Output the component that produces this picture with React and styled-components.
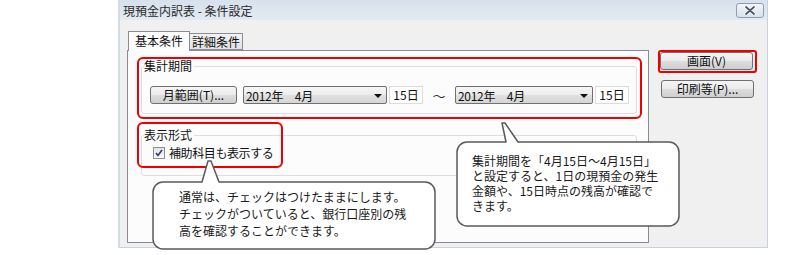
import React from "react";
import styled, { createGlobalStyle } from "styled-components";

const Global = createGlobalStyle`
  html, body { margin: 0; padding: 0; background: #fff; }
  body { font-family: "Noto Sans CJK JP", "Noto Sans", sans-serif; color: #1a1a1a; }
`;

const Stage = styled.div`
  position: relative;
  width: 800px;
  height: 255px;
  overflow: hidden;
`;

const Window = styled.div`
  margin-left: 118px;
  width: 650px;
  height: 248px;
  box-sizing: border-box;
  background: #f0f0f0;
  border-left: 2px solid #d3dbe4;
  border-right: 1px solid #c9d2dc;
  border-bottom: 1px solid #c9d2dc;
  display: flex;
  flex-direction: column;
`;

const TitleBar = styled.div`
  height: 20px;
  flex: none;
  display: flex;
  align-items: center;
  justify-content: space-between;
  padding: 0 3px 0 3px;
  background: linear-gradient(#d7e1ec, #e3eaf2);
  font-size: 12px;
  color: #2a2a2a;
`;

const CloseBtn = styled.div`
  width: 26px;
  height: 13px;
  border: 1px solid #8e9db0;
  border-radius: 3px;
  background: linear-gradient(#f3f6f9, #d9e1ea);
  display: flex;
  align-items: center;
  justify-content: center;
`;

const Body = styled.div`
  flex: 1;
  display: flex;
  padding: 11px 0 4px 7px;
  min-height: 0;
`;

const TabArea = styled.div`
  width: 522px;
  display: flex;
  flex-direction: column;
`;

const TabStrip = styled.div`
  height: 19px;
  flex: none;
  display: flex;
  align-items: flex-end;
  padding-left: 1px;
  position: relative;
  z-index: 1;
`;

const Tab = styled.div`
  box-sizing: border-box;
  height: ${(p) => (p.$active ? "20px" : "17px")};
  width: ${(p) => p.$w}px;
  margin-bottom: ${(p) => (p.$active ? "-1px" : "0")};
  border: 1px solid #898c95;
  ${(p) => (p.$active ? "border-bottom: none;" : "border-left: none;")}
  background: ${(p) => (p.$active ? "#fcfcfc" : "linear-gradient(#f3f3f3, #e2e2e2)")};
  font-size: 12px;
  line-height: 16px;
  padding-top: ${(p) => (p.$active ? "1px" : "0")};
  text-align: center;
  color: #111;
`;

const Panel = styled.div`
  flex: 1;
  border: 1px solid #898c95;
  background: #fcfcfc;
  padding: 8px 0 0 13px;
  display: flex;
  flex-direction: column;
`;

const Group = styled.fieldset`
  margin: 0;
  width: 496px;
  box-sizing: border-box;
  border: 1px solid #d8e0e6;
  border-radius: 3px;
  padding: ${(p) => p.$pt}px 0 0 2px;
  height: ${(p) => p.$h}px;
  margin-top: ${(p) => p.$mt || 0}px;
`;

const Legend = styled.legend`
  font-size: 12px;
  line-height: 14px;
  padding: 0 2px 0 0;
  margin-left: 0;
  color: #111;
`;

const Row = styled.div`
  display: flex;
  align-items: center;
  height: 18px;
  margin-left: 6px;
`;

const Button = styled.div`
  box-sizing: border-box;
  width: ${(p) => p.$w}px;
  height: 18px;
  border: 1px solid #707070;
  border-radius: 3px;
  background: linear-gradient(#f4f4f4 0%, #ebebeb 50%, #dddddd 51%, #cfcfcf 100%);
  font-size: 12px;
  line-height: 16px;
  text-align: center;
  color: #111;
  margin-left: ${(p) => p.$ml || 0}px;
  flex: none;
`;

const Combo = styled.div`
  box-sizing: border-box;
  width: ${(p) => p.$w}px;
  height: 18px;
  margin-left: ${(p) => p.$ml || 0}px;
  border: 1px solid #707070;
  border-radius: 2px;
  background: linear-gradient(#f6f6f6 0%, #ececec 50%, #e0e0e0 51%, #d6d6d6 100%);
  display: flex;
  align-items: center;
  justify-content: space-between;
  padding: 0 4px 0 2px;
  font-size: 12px;
  letter-spacing: -0.3px;
  color: #111;
  flex: none;
`;

const Arrow = styled.span`
  width: 0;
  height: 0;
  border-left: 4px solid transparent;
  border-right: 4px solid transparent;
  border-top: 4px solid #111;
  margin-top: 1px;
`;

const DayField = styled.div`
  box-sizing: border-box;
  width: ${(p) => p.$w}px;
  height: 18px;
  margin-left: 2px;
  border: 1px solid #dcdcdc;
  background: #fff;
  font-size: 12px;
  line-height: 16px;
  text-align: center;
  color: #111;
  flex: none;
`;

const Tilde = styled.span`
  width: 32px;
  text-align: center;
  font-size: 13px;
  color: #333;
  flex: none;
`;

const CheckRow = styled.label`
  display: flex;
  align-items: center;
  gap: 4px;
  margin-left: 9px;
  font-size: 12px;
  line-height: 16px;
  letter-spacing: -0.4px;
  color: #111;
`;

const CheckBox = styled.span`
  box-sizing: border-box;
  width: 12px;
  height: 12px;
  border: 1px solid #8f8f8f;
  background: linear-gradient(#e4e4e4, #fafafa);
  display: flex;
  align-items: center;
  justify-content: center;
`;

const ButtonCol = styled.div`
  display: flex;
  flex-direction: column;
  gap: 10px;
  padding: 21px 0 0 11px;
`;

const RedBox = styled.div`
  position: absolute;
  left: ${(p) => p.$x}px;
  top: ${(p) => p.$y}px;
  width: ${(p) => p.$w}px;
  height: ${(p) => p.$h}px;
  box-sizing: border-box;
  border: 2px solid #ee0000;
  border-radius: ${(p) => p.$r || 6}px;
  pointer-events: none;
`;

const CalloutWrap = styled.div`
  position: absolute;
  left: ${(p) => p.$x}px;
  top: ${(p) => p.$y}px;
  width: ${(p) => p.$w}px;
  height: ${(p) => p.$h}px;
`;

const CalloutSvg = styled.svg`
  position: absolute;
  left: 0;
  top: 0;
  overflow: visible;
`;

const CalloutText = styled.div`
  position: relative;
  padding: ${(p) => p.$pad};
  font-size: 12px;
  line-height: ${(p) => p.$lh}px;
  color: #1a1a1a;
  white-space: nowrap;
`;

function Callout({ x, y, w, h, tail, pad, lh, children }) {
  const r = 10;
  const [b1, t1, t2, b2, ty] = tail;
  const d = `M ${r} 0 H ${b1} L ${t1} ${ty} L ${t2} ${ty} L ${b2} 0 H ${w - r} A ${r} ${r} 0 0 1 ${w} ${r} V ${h - r} A ${r} ${r} 0 0 1 ${w - r} ${h} H ${r} A ${r} ${r} 0 0 1 0 ${h - r} V ${r} A ${r} ${r} 0 0 1 ${r} 0 Z`;
  return (
    <CalloutWrap $x={x} $y={y} $w={w} $h={h}>
      <CalloutSvg width={w} height={h}>
        <path d={d} fill="#fff" stroke="#5a5a5a" strokeWidth="1.5" strokeLinejoin="round" />
      </CalloutSvg>
      <CalloutText $pad={pad} $lh={lh}>{children}</CalloutText>
    </CalloutWrap>
  );
}

export default function App() {
  return (
    <Stage>
      <Global />
      <Window>
        <TitleBar>
          <span>現預金内訳表 - 条件設定</span>
          <CloseBtn>
            <svg width="12" height="9" viewBox="0 0 12 9">
              <path d="M2 1 L10 8 M10 1 L2 8" stroke="#fff" strokeWidth="3.4" strokeLinecap="round" />
              <path d="M2 1 L10 8 M10 1 L2 8" stroke="#4b5666" strokeWidth="1.8" strokeLinecap="round" />
            </svg>
          </CloseBtn>
        </TitleBar>
        <Body>
          <TabArea>
            <TabStrip>
              <Tab $active $w={62}>基本条件</Tab>
              <Tab $w={53}>詳細条件</Tab>
            </TabStrip>
            <Panel>
              <Group $pt={13} $h={55}>
                <Legend>集計期間</Legend>
                <Row>
                  <Button $w={87}>月範囲(T)...</Button>
                  <Combo $w={144} $ml={6}>
                    <span>2012年　4月</span>
                    <Arrow />
                  </Combo>
                  <DayField $w={34}>15日</DayField>
                  <Tilde>～</Tilde>
                  <Combo $w={138}>
                    <span>2012年　4月</span>
                    <Arrow />
                  </Combo>
                  <DayField $w={34}>15日</DayField>
                </Row>
              </Group>
              <Group $pt={3} $h={48} $mt={14}>
                <Legend>表示形式</Legend>
                <CheckRow>
                  <CheckBox>
                    <svg width="8" height="8" viewBox="0 0 8 8">
                      <path d="M1 4 L3 6.5 L7 1" fill="none" stroke="#2a3f6e" strokeWidth="1.6" />
                    </svg>
                  </CheckBox>
                  補助科目も表示する
                </CheckRow>
              </Group>
            </Panel>
          </TabArea>
          <ButtonCol>
            <Button $w={93}>画面(V)</Button>
            <Button $w={93} $ml={1}>印刷等(P)...</Button>
          </ButtonCol>
        </Body>
      </Window>

      <RedBox $x={137} $y={57} $w={505} $h={62} />
      <RedBox $x={137} $y={122} $w={146} $h={46} />
      <RedBox $x={658} $y={50} $w={99} $h={23} $r={3} />

      <Callout x={153} y={182} w={282} h={67} tail={[49, 55, 58, 66, -21]} pad="6px 0 0 26px" lh={17}>
        通常は、チェックはつけたままにします。<br />
        チェックがついていると、銀行口座別の残<br />
        高を確認することができます。
      </Callout>
      <Callout x={457} y={142} w={222} h={84} tail={[49, 45, 48, 61, -19]} pad="11px 0 0 15px" lh={15}>
        集計期間を「4月15日～4月15日」<br />
        と設定すると、1日の現預金の発生<br />
        金額や、15日時点の残高が確認で<br />
        きます。
      </Callout>
    </Stage>
  );
}
